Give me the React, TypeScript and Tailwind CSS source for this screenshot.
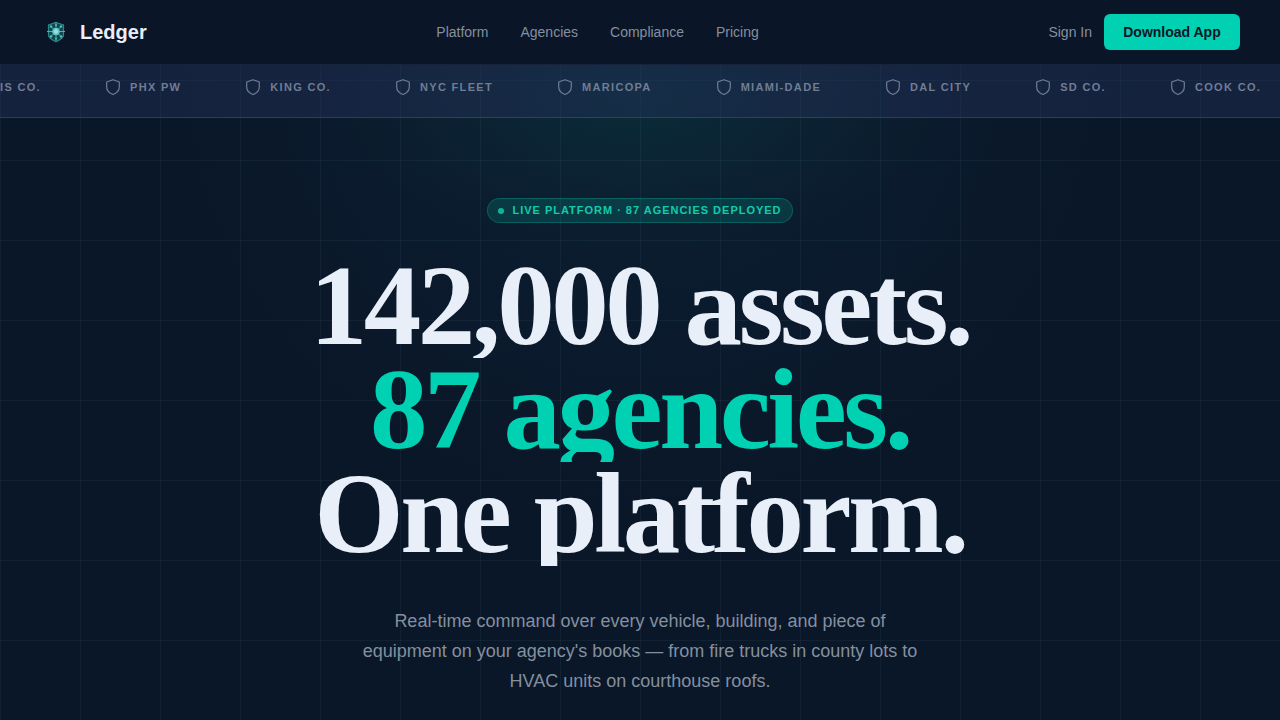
const navLinks = ["Platform", "Agencies", "Compliance", "Pricing"];

const agencies = [
  "HARRIS CO.",
  "PHX PW",
  "KING CO.",
  "NYC FLEET",
  "MARICOPA",
  "MIAMI-DADE",
  "DAL CITY",
  "SD CO.",
  "COOK CO.",
];

const headline = [
  { text: "142,000 assets.", color: "text-[#e8eff8]" },
  { text: "87 agencies.", color: "text-[#00d1b2]" },
  { text: "One platform.", color: "text-[#e8eff8]" },
];

function Logo() {
  return (
    <svg viewBox="0 0 32 32" className="size-8" fill="none" aria-hidden="true">
      <path
        d="M16 6.500 23.500 9v10c0 3-3.500 5-7.500 6.800-4-1.800-7.500-3.800-7.500-6.800V9L16 6.500Z"
        fill="#0f4650"
        stroke="#2b8a8a"
        strokeWidth="1.200"
      />
      <path
        d="M16 6v19M7 15.500h18M10.500 10l11 11M21.500 10l-11 11"
        stroke="#4fb0ac"
        strokeWidth="1"
      />
      <g fill="#5cbab5">
        <circle cx="11" cy="10.500" r="1.200" />
        <circle cx="21" cy="10.500" r="1.200" />
        <circle cx="11" cy="20.500" r="1.200" />
        <circle cx="21" cy="20.500" r="1.200" />
        <circle cx="16" cy="9" r="1" />
        <circle cx="16" cy="22.500" r="1" />
      </g>
      <circle cx="16" cy="15.500" r="3.800" fill="#5cc4bd" />
      <circle cx="16" cy="15.500" r="2.200" fill="#8fe3dc" />
    </svg>
  );
}

function ShieldIcon() {
  return (
    <svg viewBox="0 0 16 16" className="size-4 shrink-0" fill="none" aria-hidden="true">
      <path
        d="M8 .7 14.300 3v5c0 3.500-2.400 6-6.300 7.500C4.100 14 1.700 11.500 1.700 8V3L8 .7Z"
        stroke="currentColor"
        strokeWidth="1.200"
        strokeLinejoin="round"
      />
    </svg>
  );
}

function Header() {
  return (
    <header className="fixed inset-x-0 top-0 z-20 border-b border-[#16233a] bg-[#0a1527]">
      <div className="flex h-16 items-center justify-between px-10">
        <a href="#" className="flex items-center gap-2 text-xl font-bold text-[#e8eff8]">
          <Logo />
          Ledger
        </a>
        <nav className="flex items-center gap-8 text-sm text-[#848f9f]">
          {navLinks.map((link) => (
            <a key={link} href="#">
              {link}
            </a>
          ))}
        </nav>
        <div className="flex items-center gap-3 text-sm">
          <a href="#" className="text-[#848f9f]">
            Sign In
          </a>
          <button className="h-9 w-34 rounded-md bg-[#00d1b2] font-bold whitespace-nowrap text-[#0a1628]">
            Download App
          </button>
        </div>
      </div>
    </header>
  );
}

function AgencyTicker() {
  return (
    <div className="overflow-hidden border-b border-[#8ca0c8]/20 bg-[#243058]/45 pt-[22px] pb-[21px]">
      <ul className="-ml-[62px] flex w-max gap-16 text-[11px] leading-[18px] font-bold tracking-[0.12em] text-[#6f7d95]">
        {agencies.map((name) => (
          <li key={name} className="flex items-center gap-[9px]">
            <ShieldIcon />
            {name}
          </li>
        ))}
      </ul>
    </div>
  );
}

export default function App() {
  return (
    <div className="relative min-h-screen overflow-hidden bg-[#0a1728] font-['Liberation_Sans',Arial,sans-serif]">
      {/* Glow and grid */}
      <div className="absolute inset-0 bg-[radial-gradient(ellipse_25%_22%_at_50%_13%,rgba(0,200,120,0.07),transparent),radial-gradient(ellipse_36%_60%_at_50%_10%,rgba(20,80,120,0.15),transparent)]" />
      <div className="absolute inset-0 bg-[linear-gradient(to_right,rgba(120,170,190,0.07)_1px,transparent_1px),linear-gradient(to_bottom,rgba(120,170,190,0.07)_1px,transparent_1px)] bg-[size:80px_80px]" />

      <Header />

      <main className="relative pt-14">
        <AgencyTicker />

        <section className="flex flex-col items-center px-10 pt-20 text-center">
          <div className="flex h-[25px] items-center gap-2 rounded-full border border-[#00d4b4]/25 bg-[#00d4b4]/15 px-2.5 text-[11px] font-bold tracking-[0.09em] text-[#12cbac]">
            <span className="size-1.5 rounded-full bg-[#0fb598]" />
            LIVE PLATFORM · 87 AGENCIES DEPLOYED
          </div>

          <h1 className="mt-[31px] font-['Liberation_Serif','Times_New_Roman',serif] text-[115px] leading-[104px] font-bold tracking-[-0.03em]">
            {headline.map((line) => (
              <span key={line.text} className={`block overflow-hidden ${line.color}`}>
                {line.text}
              </span>
            ))}
          </h1>

          <p className="mt-10 max-w-[580px] pb-6 text-lg leading-[30px] text-[#848f9f]">
            Real-time command over every vehicle, building, and piece of equipment on your
            agency's books — from fire trucks in county lots to HVAC units on courthouse roofs.
          </p>
        </section>
      </main>
    </div>
  );
}
